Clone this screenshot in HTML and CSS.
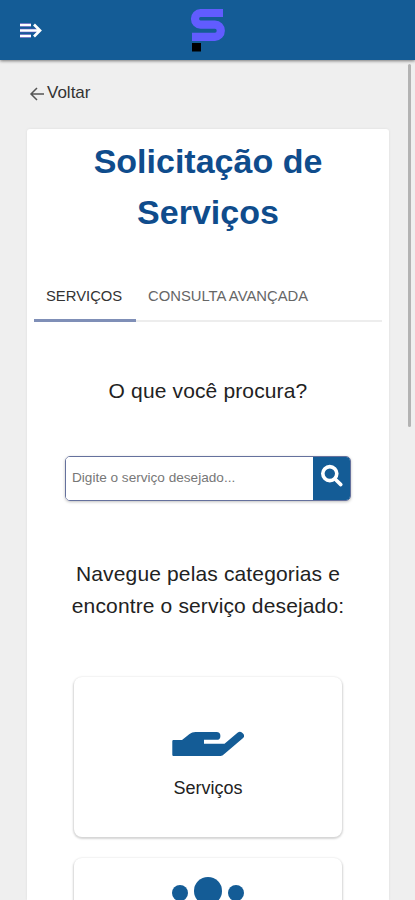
FILE: index.html
```html
<!DOCTYPE html>
<html lang="pt-BR">
<head>
<meta charset="utf-8">
<meta name="viewport" content="width=device-width, initial-scale=1">
<title>Solicitação de Serviços</title>
<link rel="stylesheet" href="styles.css">
</head>
<body>
<header class="topbar">
  <button class="menu" aria-label="Menu">
    <svg width="24" height="18" viewBox="0 0 24 18"><path class="menu-edge" d="M1 4h11M1 9.500h16M1 15h11"/><path class="menu-line" d="M1 4h11M1 9.500h20M1 15h11M15 3.500 21 9.500l-6 6"/></svg>
  </button>
  <svg class="logo" width="38" height="44" viewBox="0 0 38 44"><path class="logo-s" d="M34 5H11.500a5.500 5.800 0 0 0 0 11.600H26a5.800 6.100 0 0 1 0 12.200H3"/><path d="M3 35h9v8.500H3z"/></svg>
</header>
<main class="page">
  <a class="back">
    <svg width="16" height="16" viewBox="0 0 16 16"><path d="M15 8H2M8 2 2 8l6 6"/></svg>
    <span>Voltar</span>
  </a>
  <section class="panel">
    <h1>Solicitação de Serviços</h1>
    <nav class="tabs">
      <a class="tab active">SERVIÇOS</a>
      <a class="tab">CONSULTA AVANÇADA</a>
    </nav>
    <h2 class="question">O que você procura?</h2>
    <form class="search">
      <input type="text" placeholder="Digite o serviço desejado..." aria-label="Serviço">
      <button type="button" aria-label="Pesquisar">
        <svg width="24" height="24" viewBox="0 0 24 24"><circle cx="9.800" cy="9.600" r="7"/><path d="m15 15 5.800 5.600"/></svg>
      </button>
    </form>
    <h2 class="browse">Navegue pelas categorias e<br>encontre o serviço desejado:</h2>
    <div class="cards">
      <article class="card">
        <svg class="hand" width="72" height="26" viewBox="0 0 72 26"><path d="M1.500 9H10L17.500 3Q20 1 23.500 1H44.500A3.900 3.900 0 0 1 44.500 8.800H32V12.800H52.500L65.500 1.700Q68.500-.4 71 2.400T70.800 7.300L52.300 23Q50.500 25 48.500 25H1.500Q.3 25 .3 23.800V10.200Q.3 9 1.500 9Z"/></svg>
        <span>Serviços</span>
      </article>
      <article class="card">
        <svg class="people" width="72" height="58" viewBox="0 0 72 58"><circle cx="8" cy="16" r="8"/><circle cx="36" cy="14" r="14"/><circle cx="64" cy="16" r="8"/><path d="M14 58V46a14 14 0 0 1 14-14h16a14 14 0 0 1 14 14v12z"/></svg>
      </article>
    </div>
  </section>
</main>
<div class="scrollbar"></div>
</body>
</html>
```
FILE: styles.css
```css
* { box-sizing: border-box; }
body {
  margin: 0;
  height: 900px;
  overflow: hidden;
  background: #efefef;
  color: #222;
  font-family: "Liberation Sans", Arial, sans-serif;
}
button { border: 0; padding: 0; }
.topbar {
  position: relative;
  z-index: 1;
  height: 60px;
  display: grid;
  grid-template-columns: 1fr 38px 1fr;
  padding: 8px 19px 0;
  background: #145c96;
  box-shadow: 0 1px 3px rgba(0, 0, 0, .5);
}
.menu { width: 24px; height: 18px; margin-top: 13px; background: none; }
.menu svg, .logo { display: block; }
.menu path { fill: none; }
.menu-edge { stroke: #4d50b5; stroke-width: 4; }
.menu-line { stroke: #fff; stroke-width: 2.7; }
.logo-s { fill: none; stroke: #615cff; stroke-width: 8.2; }
.page { height: 840px; padding: 22px 26px 0 27px; overflow: hidden; }
.back {
  display: flex;
  align-items: center;
  gap: 2px;
  height: 22px;
  padding-left: 2px;
  font-size: 17px;
  color: #333;
}
.back svg { margin-top: 1px; fill: none; stroke: #555; stroke-width: 1.5; }
.panel {
  height: 771px;
  margin-top: 25px;
  padding: 7px 7px 0;
  overflow: hidden;
  background: #fff;
  border-radius: 3px 3px 0 0;
  box-shadow: 0 0 3px rgba(0, 0, 0, .08);
}
h1 {
  width: 260px;
  margin: 0 auto;
  color: #0f4c8c;
  font-size: 34px;
  line-height: 51px;
  text-align: center;
}
.tabs {
  display: flex;
  height: 51px;
  margin-top: 33px;
  box-shadow: inset 0 -2px #ededed;
}
.tab {
  padding: 17px 12px 0;
  font-size: 14.8px;
  line-height: 17px;
  color: #666;
  white-space: nowrap;
}
.active { width: 102px; color: #333; border-bottom: 3px solid #7f8fb7; }
h2 {
  margin: 0;
  font-size: 21px;
  font-weight: 400;
  line-height: 32px;
  letter-spacing: .14px;
  text-align: center;
}
.question { margin-top: 53px; }
.search {
  display: flex;
  width: 286px;
  height: 45px;
  margin: 49px 0 0 31px;
  border: 1px solid #65719d;
  border-radius: 5px;
  overflow: hidden;
  box-shadow: 0 1px 3px rgba(0, 0, 0, .25);
}
.search input {
  flex: 1;
  min-width: 0;
  border: 0;
  padding: 0 6px 2px;
  font: 13.6px "Liberation Sans", Arial, sans-serif;
  background: #fff;
}
.search input::placeholder { color: #777; }
.search button {
  width: 37px;
  display: flex;
  justify-content: center;
  padding-top: 7px;
  background: #145c96;
}
.search svg { fill: none; stroke: #fff; stroke-width: 3.6; stroke-linecap: round; }
.browse { margin-top: 57px; }
.cards { display: grid; gap: 21px; width: 268px; margin: 55px auto 0 40px; }
.card {
  height: 160px;
  display: flex;
  flex-direction: column;
  align-items: center;
  border-radius: 8px;
  background: #fff;
  box-shadow: 0 1px 2px 1px rgba(0, 0, 0, .17);
  font-size: 18px;
}
.card svg { fill: #145c96; }
.hand { margin-top: 54px; }
.card span { margin-top: 21px; }
.people { margin-top: 19px; }
.scrollbar {
  position: absolute;
  top: 64px;
  right: 4px;
  width: 3px;
  height: 363px;
  border-radius: 2px;
  background: #b3b3b3;
}
```
